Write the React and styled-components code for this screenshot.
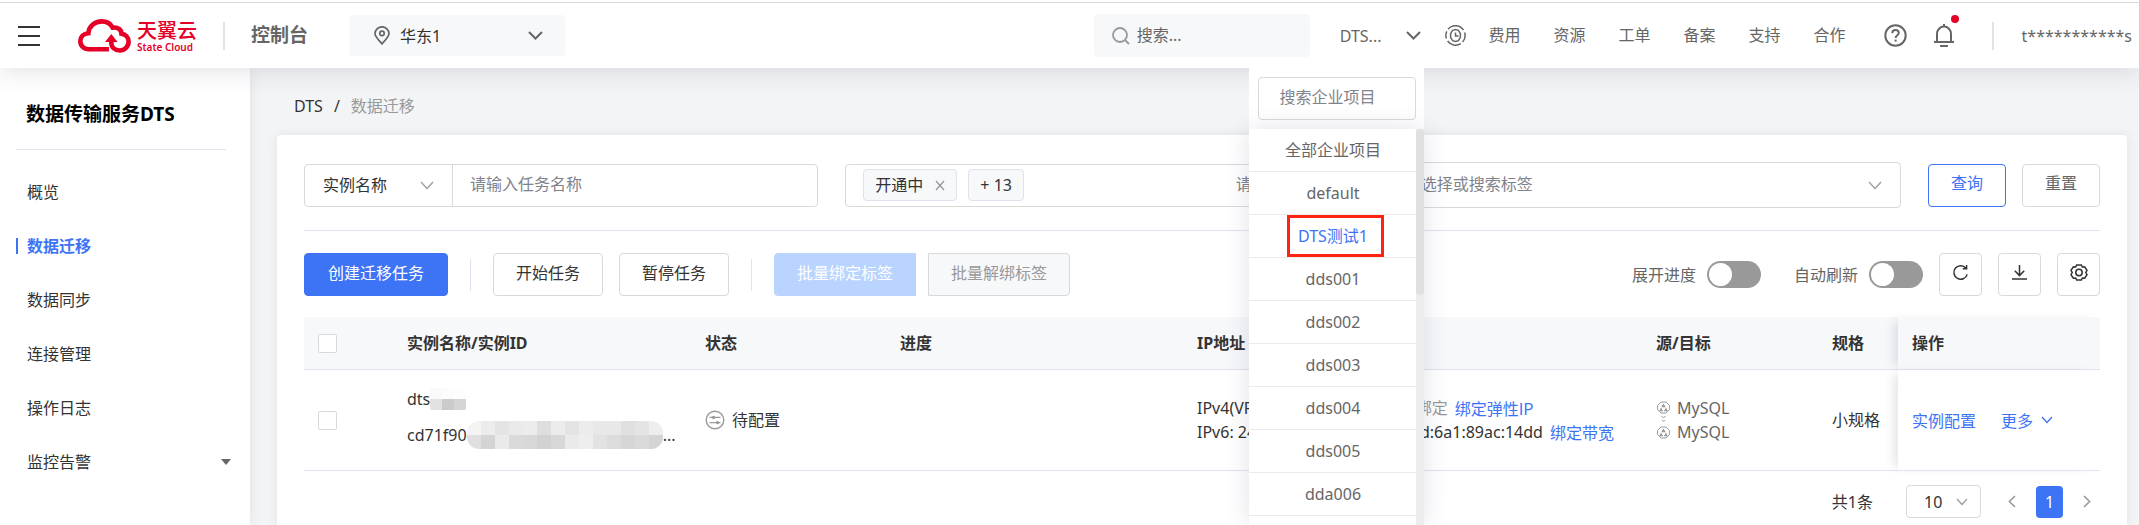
import React, { useState } from 'react';
import styled, { createGlobalStyle, ThemeProvider } from 'styled-components';

const theme = {
    primary: '#3d73f5',
    primary_disabled: '#b8d4ff',
    brand: '#e60027',
    text_primary: '#333333',
    text_secondary: '#666666',
    text_muted: '#999999',
    border: '#d9d9d9',
    divider: '#e1e3ee',
    bgLight: '#f7f8fa',
};

const GlobalStyle = createGlobalStyle`
    * {
        box-sizing: border-box;
    }

    body {
        margin: 0;
        background: #f3f4f6;
        color: #333333;
    }

    body, button, input, select {
        font-family: "Noto Sans", "Noto Sans CJK SC", sans-serif;
        font-size: 16px;
        line-height: 24px;
    }

    button, input, select {
        margin: 0;
        padding: 0;
        border: none;
        background: none;
        color: inherit;
    }

    button {
        cursor: pointer;
    }

    input::placeholder {
        color: #7f838c;
        opacity: 1;
    }

    a {
        color: inherit;
        text-decoration: none;
    }
`;

const Page = styled.div`
    height: 100vh;
    overflow: hidden;
    display: flex;
    flex-direction: column;
`;

/* ---------- header ---------- */

const TopLine = styled.div`
    height: 3px;
    flex: none;
    background: #ffffff;
    border-bottom: 1px solid #d9d9d9;
    position: relative;
    z-index: 11;
`;

const Header = styled.header`
    position: relative;
    z-index: 10;
    flex: none;
    height: 65px;
    padding: 0 7px 0 18px;
    display: flex;
    align-items: center;
    background: #ffffff;
    color: ${({ theme }) => theme.text_secondary};
    box-shadow: 0 4px 24px rgba(30, 35, 70, 0.13);
    white-space: nowrap;
`;

const MenuButton = styled.button`
    width: 22px;
    height: 20px;
    margin-right: 38px;
    display: flex;
    flex-direction: column;
    justify-content: space-between;

    span {
        width: 22px;
        height: 2px;
        background: ${({ theme }) => theme.text_primary};
    }
`;

const Brand = styled.a`
    display: flex;
    align-items: center;
    gap: 6px;
    color: ${({ theme }) => theme.brand};
`;

const BrandText = styled.span`
    display: flex;
    flex-direction: column;
`;

const BrandName = styled.span`
    font-family: "Noto Sans CJK SC", sans-serif;
    font-size: 20px;
    font-weight: 500;
    line-height: 22px;
`;

const BrandSub = styled.span`
    font-size: 10px;
    font-weight: 600;
    line-height: 12px;
`;

const HeaderDivider = styled.span`
    width: 2px;
    height: 28px;
    margin: 0 26px;
    background: #e3e3e3;
`;

const ConsoleTitle = styled.span`
    padding-bottom: 2px;
    font-size: 19px;
    font-weight: 600;
`;

const RegionButton = styled.button`
    width: 216px;
    height: 41px;
    margin-left: 41px;
    padding: 0 22px 0 25px;
    display: flex;
    align-items: center;
    gap: 10px;
    border-radius: 4px;
    background: ${({ theme }) => theme.bgLight};
    color: ${({ theme }) => theme.text_primary};

    svg {
        color: ${({ theme }) => theme.text_secondary};
    }

    svg:last-child {
        margin-left: auto;
    }
`;

const HeaderRight = styled.div`
    height: 100%;
    margin-left: auto;
    display: flex;
    align-items: center;
`;

const SearchBox = styled.label`
    width: 216px;
    height: 43px;
    padding: 0 18px;
    display: flex;
    align-items: center;
    gap: 7px;
    border-radius: 4px;
    background: ${({ theme }) => theme.bgLight};
    color: ${({ theme }) => theme.text_muted};

    input {
        flex: 1;
        min-width: 0;
        padding-bottom: 2px;
    }

    input::placeholder {
        color: ${({ theme }) => theme.text_secondary};
    }
`;

const ProjectPicker = styled.div`
    position: relative;
    height: 100%;
    margin-right: 21px;
    display: flex;
    align-items: center;
`;

const ProjectButton = styled.button`
    height: 100%;
    padding: 0 3px 0 30px;
    display: flex;
    align-items: center;
    gap: 25px;
`;

const HeaderNav = styled.nav`
    margin: 0 38px 0 22px;
    padding-bottom: 2px;
    display: flex;
    gap: 33px;
`;

const IconButton = styled.button`
    position: relative;
    display: flex;
`;

const BellButton = styled(IconButton)`
    margin-left: 27px;
`;

const RedDot = styled.span`
    position: absolute;
    top: -9px;
    right: -5px;
    width: 8px;
    height: 8px;
    border-radius: 50%;
    background: ${({ theme }) => theme.brand};
`;

const UserDivider = styled(HeaderDivider)`
    margin: 0 28px 0 38px;
`;

/* ---------- project dropdown ---------- */

const Dropdown = styled.div`
    position: absolute;
    top: 100%;
    right: 0;
    width: 175px;
    height: calc(100vh - 68px);
    display: flex;
    flex-direction: column;
    background: #ffffff;
`;

const DropdownSearch = styled.div`
    padding: 9px 8px 9px 9px;

    input {
        width: 100%;
        height: 43px;
        padding: 0 20px 3px;
        border: 1px solid ${({ theme }) => theme.border};
        border-radius: 4px;
    }
`;

const DropdownBody = styled.div`
    flex: 1;
    display: flex;
    background: #ffffff;
    box-shadow: 0 0 24px rgba(30, 35, 90, 0.13);
`;

const ProjectList = styled.ul`
    flex: 1;
    margin: 0;
    padding: 0;
    list-style: none;
`;

const ProjectItem = styled.li`
    height: 43px;
    display: flex;
    align-items: center;
    justify-content: center;
    border-bottom: 1px solid #ebebeb;

    button {
        margin-right: ${({ $active }) => ($active ? '-5px' : '0')};
        padding: ${({ $active }) => ($active ? '6px 13px 6px 8px' : '6px 8px')};
        color: ${({ theme, $active }) => ($active ? theme.primary : 'inherit')};
        outline: ${({ $active }) => ($active ? '3px solid #ff2314' : 'none')};
    }
`;

const ScrollTrack = styled.div`
    width: 8px;
    background: #ededed;
`;

const ScrollThumb = styled.div`
    height: 42%;
    border-radius: 4px;
    background: #e0e0e0;
`;

/* ---------- sidebar ---------- */

const Body = styled.div`
    flex: 1;
    min-height: 0;
    display: flex;
`;

const Sidebar = styled.aside`
    flex: none;
    width: 250px;
    padding: 32px 16px 0;
    background: #ffffff;
    box-shadow: 0 0 14px rgba(0, 0, 0, 0.08);
`;

const SidebarTitle = styled.h2`
    margin: 0 0 15px;
    padding: 0 8px 21px 10px;
    border-bottom: 1px solid ${({ theme }) => theme.divider};
    color: #000000;
    font-size: 19px;
    font-weight: 700;
    line-height: 28px;
    width: 210px;
`;

const SideItem = styled.a`
    height: 54px;
    display: flex;
    align-items: center;
    justify-content: space-between;
    padding-right: 3px;
    color: ${({ theme, $active }) => ($active ? theme.primary : theme.text_primary)};
    font-weight: ${({ $active }) => ($active ? 700 : 400)};
`;

const SideLabel = styled.span`
    padding-left: 9px;
    border-left: 2px solid ${({ theme, $active }) => ($active ? theme.primary : 'transparent')};
    line-height: 16px;
`;

const Caret = styled.span`
    border: 5px solid transparent;
    border-top: 6px solid ${({ theme }) => theme.text_secondary};
    border-bottom: none;
`;

/* ---------- content ---------- */

const Main = styled.main`
    flex: 1;
    min-width: 0;
    padding: 26px 12px 0 27px;
    display: flex;
    flex-direction: column;
`;

const Breadcrumb = styled.nav`
    padding: 0 17px 17px;
    display: flex;
    gap: 11px;

    span:last-child {
        color: ${({ theme }) => theme.text_muted};
    }
`;

const Card = styled.section`
    flex: 1;
    padding: 27px 27px 0;
    border-radius: 4px 4px 0 0;
    background: #ffffff;
    box-shadow: 0 0 12px rgba(0, 0, 0, 0.07);
`;

const FilterBar = styled.div`
    display: grid;
    grid-template-columns: repeat(3, minmax(0, 1fr)) auto;
    align-items: center;
    gap: 27px;
    height: 69px;
    padding-bottom: 22px;
    border-bottom: 1px solid ${({ theme }) => theme.divider};
`;

const Field = styled.div`
    height: ${({ $height }) => $height || 43}px;
    display: flex;
    align-items: center;
    gap: 11px;
    padding: 0 18px 0 17px;
    border: 1px solid ${({ theme }) => theme.border};
    border-radius: 4px;
    color: ${({ theme }) => theme.text_muted};

    input {
        flex: 1;
        min-width: 0;
        padding-bottom: 2px;
        color: ${({ theme }) => theme.text_primary};
    }
`;

const NameField = styled(Field)`
    padding: 0;
    gap: 0;

    input {
        height: 100%;
        padding: 0 17px 3px;
        border-left: 1px solid ${({ theme }) => theme.border};
    }
`;

const SelectWrap = styled.div`
    width: ${({ $width }) => $width}px;
    display: flex;
    align-items: center;
    color: ${({ theme }) => theme.text_muted};

    select {
        appearance: none;
        flex: 1;
        min-width: 0;
        height: 30px;
        padding-left: ${({ $indent }) => $indent}px;
        color: ${({ theme }) => theme.text_primary};
        outline: none;
    }

    svg {
        margin-right: ${({ $end }) => $end}px;
    }
`;

const StatusInput = styled.input`
    max-width: 105px;
    margin-left: auto;
`;

const Tag = styled.span`
    height: 32px;
    padding: 0 11px;
    display: flex;
    align-items: center;
    gap: 12px;
    border: 1px solid #dfe2ec;
    border-radius: 4px;
    background: ${({ theme }) => theme.bgLight};
    color: ${({ theme }) => theme.text_primary};
    white-space: nowrap;

    button {
        display: flex;
        color: ${({ theme }) => theme.text_muted};
    }
`;

const ButtonPair = styled.div`
    display: flex;
    gap: 16px;
`;

const Button = styled.button`
    height: 43px;
    padding: 0 22px 4px;
    border: 1px solid ${({ theme }) => theme.border};
    border-radius: 4px;
    background: #ffffff;
    color: ${({ theme }) => theme.text_primary};
    white-space: nowrap;
`;

const PrimaryButton = styled(Button)`
    padding: 0 23px 4px;
    background: ${({ theme }) => theme.primary};
    border-color: ${({ theme }) => theme.primary};
    color: #ffffff;
`;

const OutlineButton = styled(Button)`
    border-color: ${({ theme }) => theme.primary};
    color: ${({ theme }) => theme.primary};
`;

const ResetButton = styled(Button)`
    color: ${({ theme }) => theme.text_secondary};
`;

const BindButton = styled(Button)`
    border-color: ${({ theme }) => theme.primary_disabled};
    border-radius: 4px 0 0 4px;
    background: ${({ theme }) => theme.primary_disabled};
    color: #ffffff;
`;

const UnbindButton = styled(Button)`
    border-radius: 0 4px 4px 0;
    background: ${({ theme }) => theme.bgLight};
    color: ${({ theme }) => theme.text_muted};
`;

const SquareButton = styled(Button)`
    width: 43px;
    padding: 0 0 4px;
    display: flex;
    align-items: center;
    justify-content: center;
`;

const Toolbar = styled.div`
    display: flex;
    align-items: center;
    gap: 16px;
    padding: 22px 0 21px;
`;

const ToolDivider = styled.span`
    width: 1px;
    height: 32px;
    margin: 0 6px;
    background: ${({ theme }) => theme.divider};
`;

const TagButtons = styled.div`
    display: flex;
    gap: 12px;
`;

const ToolbarRight = styled.div`
    margin-left: auto;
    display: flex;
    align-items: center;
    gap: 16px;
`;

const SwitchLabel = styled.label`
    display: flex;
    align-items: center;
    gap: 11px;
    margin-left: 17px;
    color: ${({ theme }) => theme.text_secondary};
    white-space: nowrap;
`;

const Switch = styled.input`
    appearance: none;
    width: 54px;
    height: 27px;
    padding: 2px;
    display: flex;
    border-radius: 14px;
    background: ${({ theme, checked }) => (checked ? theme.primary : theme.text_muted)};
    justify-content: ${({ checked }) => (checked ? 'flex-end' : 'flex-start')};
    cursor: pointer;

    &::before {
        content: '';
        width: 23px;
        height: 23px;
        border-radius: 50%;
        background: #ffffff;
    }
`;

const Checkbox = styled.input`
    appearance: none;
    display: block;
    width: 19px;
    height: 19px;
    border: 1px solid ${({ theme }) => theme.border};
    border-radius: 2px;
    background: #ffffff;
`;

const Table = styled.table`
    width: 100%;
    table-layout: fixed;
    border-collapse: separate;
    border-spacing: 0;
`;

const Th = styled.th`
    height: 53px;
    padding: 0 0 0 14px;
    border-bottom: 1px solid ${({ theme }) => theme.divider};
    background: ${({ theme }) => theme.bgLight};
    font-weight: 700;
    text-align: left;
    white-space: nowrap;
    box-shadow: ${({ $fixed }) => ($fixed ? '-8px 0 10px -4px rgba(30, 35, 90, 0.12)' : 'none')};
`;

const Td = styled.td`
    height: 101px;
    padding: 0 0 0 14px;
    border-bottom: 1px solid ${({ theme }) => theme.divider};
    background: #ffffff;
    white-space: nowrap;
    box-shadow: ${({ $fixed }) => ($fixed ? '-8px 0 10px -4px rgba(30, 35, 90, 0.12)' : 'none')};
`;

const NameCell = styled.div`
    padding-bottom: 6px;
`;

const NameLine = styled.div`
    height: 36px;
    display: flex;
    align-items: center;
`;

const Status = styled.div`
    display: flex;
    align-items: center;
    gap: 7px;

    svg {
        color: ${({ theme }) => theme.text_muted};
    }
`;

const AddressLine = styled.div`
    display: flex;
    gap: 7px;
`;

const Muted = styled.span`
    color: ${({ theme }) => theme.text_muted};
`;

const Link = styled.a`
    display: inline-flex;
    align-items: center;
    gap: 8px;
    margin-right: ${({ $gap }) => $gap || 0}px;
    color: ${({ theme }) => theme.primary};
    font-family: "Noto Sans CJK SC", sans-serif;
`;

const Endpoints = styled.div`
    display: flex;
    align-items: center;
    gap: 7px;
    padding-left: 1px;
    color: ${({ theme }) => theme.text_secondary};

    svg {
        color: ${({ theme }) => theme.text_muted};
    }
`;

const Pagination = styled.div`
    display: flex;
    align-items: center;
    justify-content: flex-end;
    padding: 14px 9px 14px 0;

    button {
        display: flex;
        color: ${({ theme }) => theme.text_muted};
    }
`;

const PageSize = styled(SelectWrap)`
    height: 33px;
    margin: 0 27px 0 33px;
    border: 1px solid ${({ theme }) => theme.border};
    border-radius: 4px;
`;

const PageNumber = styled.a`
    width: 27px;
    height: 32px;
    margin: 0 20px;
    border-radius: 4px;
    background: ${({ theme }) => theme.primary};
    color: #ffffff;
    line-height: 32px;
    text-align: center;
`;

/* ---------- icons ---------- */

const Svg = ({ w, h, stroke = 2, children }) => (
    <svg
        width={w}
        height={h}
        viewBox={`0 0 ${w} ${h}`}
        fill="none"
        stroke="currentColor"
        strokeWidth={stroke}
        aria-hidden="true"
    >
        {children}
    </svg>
);

const Chevron = ({ w = 15, h = 9, stroke = 2 }) => (
    <Svg w={w} h={h} stroke={stroke}>
        <path d={`M1 1L${w / 2} ${h - 1.5}L${w - 1} 1`} />
    </Svg>
);

const CloudLogo = () => (
    <Svg w={53} h={34} stroke={4.6}>
        <path d="M31 30.2H10.8C5.8 30.2 2.3 26.6 2.3 22.2C2.3 17.8 5.6 14.6 10.4 14.2C10.8 7.4 16.6 2.4 23.8 2.4C29 2.4 32.6 4.8 34.6 8.6C40 7.8 43.4 10.8 43.4 14.6C47.6 15.2 50.6 18.6 50.6 22.6C50.6 27.6 46.6 31.5 41.8 31.5C37 31.5 33.3 28.4 33.3 23.6V21" />
        <path d="M33.3 15L39.6 23H27Z" fill="currentColor" stroke="none" />
    </Svg>
);

const PinIcon = () => (
    <Svg w={16} h={19} stroke={1.7}>
        <path d="M8 17.8C5 14.6 1 11 1 7.6a7 6.8 0 0 1 14 0C15 11 11 14.6 8 17.8Z" />
        <circle cx="8" cy="7.4" r="2.2" />
    </Svg>
);

const SearchIcon = () => (
    <Svg w={18} h={18} stroke={1.8}>
        <circle cx="8" cy="8" r="7" />
        <path d="M13 13L17 17" />
    </Svg>
);

const ClockIcon = () => (
    <Svg w={21} h={21} stroke={1.5}>
        <path d="M3 4.2A9.6 9.6 0 0 1 18.6 5.2M19.6 7.6A9.6 9.6 0 0 1 17.6 17M15.8 18.6A9.6 9.6 0 0 1 2.6 16M1.4 13.6A9.6 9.6 0 0 1 1.8 6.4" />
        <path d="M7.6 5.4L10.5 4.6L13.4 5.4L15.4 8.6V12.4L13.4 15.6L10.5 16.4L7.6 15.6L5.6 12.4V8.6Z" />
        <path d="M10.5 7.4V11H13.6" />
    </Svg>
);

const HelpIcon = () => (
    <Svg w={23} h={23}>
        <circle cx="11.5" cy="11.5" r="10.2" />
        <path d="M8.3 9.2C8.3 7.2 9.7 6 11.5 6S14.8 7.2 14.8 9C14.8 11.3 11.6 11.4 11.6 14" />
        <path d="M11.6 15.6V17.6" />
    </Svg>
);

const BellIcon = () => (
    <Svg w={20} h={23}>
        <path d="M0 18H20M3 18V10A7 7.4 0 0 1 17 10V18M10 0V3M6 22H14" />
    </Svg>
);

const CloseIcon = () => (
    <Svg w={10} h={11} stroke={1.3}>
        <path d="M1 1L9 10M9 1L1 10" />
    </Svg>
);

const RefreshIcon = () => (
    <Svg w={17} h={17} stroke={1.5}>
        <path d="M14 4.2A6.8 6.8 0 1 0 15.2 10.4M14.6 1V4.8H10.8" />
    </Svg>
);

const DownloadIcon = () => (
    <Svg w={15} h={15} stroke={1.5}>
        <path d="M7.5 0V10.4M2.8 5.8L7.5 10.6L12.2 5.8M0 14H15" />
    </Svg>
);

const SettingIcon = () => (
    <Svg w={18} h={17} stroke={1.5}>
        <path d="M6.6 1H11.4L12.3 3L14.6 2.8L17 6.4L15.8 8.5L17 10.6L14.6 14.2L12.3 14L11.4 16H6.6L5.7 14L3.4 14.2L1 10.6L2.2 8.5L1 6.4L3.4 2.8L5.7 3Z" />
        <circle cx="9" cy="8.5" r="3.2" />
    </Svg>
);

const PendingIcon = () => (
    <Svg w={20} h={20} stroke={1.4}>
        <circle cx="10" cy="10" r="8.8" />
        <path d="M4.5 7.4H15.5M4.5 12.6H15.5" />
        <circle cx="8.6" cy="7.4" r="1.6" fill="currentColor" stroke="none" />
        <circle cx="12.6" cy="12.6" r="1.6" fill="currentColor" stroke="none" />
    </Svg>
);

const SourceTargetIcon = () => (
    <Svg w={13} h={38} stroke={1}>
        {[0, 25].map((y) => (
            <g key={y} transform={`translate(0 ${y})`}>
                <path d="M4 1H9L12.4 4.4V8.6L9 12H4L0.6 8.6V4.4Z" />
                <path d="M6.5 2.6L8.8 6.2H4.2ZM4 6.6L6.2 10.2H2.2ZM9 6.6L10.8 10.2H6.8Z" fill="currentColor" stroke="none" />
            </g>
        ))}
        <path d="M4.6 15L6.5 17L8.4 15M5.2 19L6.5 20.4L7.8 19" />
    </Svg>
);

const ArrowIcon = ({ d }) => (
    <Svg w={8} h={13} stroke={1.6}>
        <path d={d} />
    </Svg>
);

/* pixelated cover over the private part of a value */
const Mosaic = ({ rows, cell, height, radius, label }) => (
    <svg width={rows[0].length * cell} height={height} role="img" aria-label={label}>
        <clipPath id={label}>
            <rect width={rows[0].length * cell} height={height} rx={radius} />
        </clipPath>
        <g clipPath={`url(#${label})`}>
            {rows.map((row, y) =>
                row.map((shade, x) => (
                    <rect
                        key={`${x}-${y}`}
                        x={x * cell}
                        y={(y * height) / rows.length}
                        width={cell}
                        height={height / rows.length}
                        fill={`rgb(${shade}, ${shade}, ${shade})`}
                    />
                ))
            )}
        </g>
    </svg>
);

/* ---------- data ---------- */

const navItems = ['费用', '资源', '工单', '备案', '支持', '合作'];
const sideItems = ['概览', '数据迁移', '数据同步', '连接管理', '操作日志', '监控告警'];
const projects = ['全部企业项目', 'default', 'DTS测试1', 'dds001', 'dds002', 'dds003', 'dds004', 'dds005', 'dda006'];

const columns = [
    { title: '实例名称/实例ID', width: 298 },
    { title: '状态', width: 195 },
    { title: '进度', width: 297 },
    { title: 'IP地址', width: 459 },
    { title: '源/目标', width: 176 },
    { title: '规格', width: 80 },
];

const nameShades = [[250, 252, 253], [226, 203, 213]];
const idShades = [
    [244, 236, 228, 234, 236, 222, 236, 228, 236, 232, 232, 224, 228, 238],
    [224, 212, 234, 218, 216, 210, 216, 234, 238, 226, 220, 214, 218, 212],
];

const ProjectDropdown = ({ project, onSelect }) => (
    <Dropdown>
        <DropdownSearch>
            <input type="text" placeholder="搜索企业项目" aria-label="搜索企业项目" />
        </DropdownSearch>
        <DropdownBody>
            <ProjectList>
                {projects.map((name) => (
                    <ProjectItem key={name} $active={name === project}>
                        <button type="button" onClick={() => onSelect(name)}>{name}</button>
                    </ProjectItem>
                ))}
            </ProjectList>
            <ScrollTrack>
                <ScrollThumb />
            </ScrollTrack>
        </DropdownBody>
    </Dropdown>
);

const TaskTable = () => (
    <Table>
        <colgroup>
            <col style={{ width: 89 }} />
            {columns.map((col) => (
                <col key={col.title} style={{ width: col.width }} />
            ))}
            <col />
        </colgroup>
        <thead>
            <tr>
                <Th><Checkbox type="checkbox" aria-label="全选" /></Th>
                {columns.map((col) => (
                    <Th key={col.title}>{col.title}</Th>
                ))}
                <Th $fixed>操作</Th>
            </tr>
        </thead>
        <tbody>
            <tr>
                <Td><Checkbox type="checkbox" aria-label="选择任务" /></Td>
                <Td>
                    <NameCell>
                        <NameLine>
                            dts
                            <Mosaic rows={nameShades} cell={12} height={22} radius={2} label="name" />
                        </NameLine>
                        <NameLine>
                            cd71f90
                            <Mosaic rows={idShades} cell={14} height={28} radius={12} label="id" />
                            ...
                        </NameLine>
                    </NameCell>
                </Td>
                <Td>
                    <Status><PendingIcon />待配置</Status>
                </Td>
                <Td />
                <Td>
                    <AddressLine>
                        <span>IPv4(VPC) : 192.168.0.114 <Muted>/ 未绑定</Muted></span>
                        <Link href="#">绑定弹性IP</Link>
                    </AddressLine>
                    <AddressLine>
                        <span>IPv6: 240e:982:d801:43e2:a00d:6a1:89ac:14dd</span>
                        <Link href="#">绑定带宽</Link>
                    </AddressLine>
                </Td>
                <Td>
                    <Endpoints>
                        <SourceTargetIcon />
                        <div>
                            <div>MySQL</div>
                            <div>MySQL</div>
                        </div>
                    </Endpoints>
                </Td>
                <Td>小规格</Td>
                <Td $fixed>
                    <Link href="#" $gap={25}>实例配置</Link>
                    <Link href="#">更多 <Chevron w={12} h={8} stroke={1.3} /></Link>
                </Td>
            </tr>
        </tbody>
    </Table>
);

const App = () => {
    const [project, setProject] = useState('DTS测试1');
    const [open, setOpen] = useState(true);
    const [expand, setExpand] = useState(false);
    const [autoRefresh, setAutoRefresh] = useState(false);

    return (
        <ThemeProvider theme={theme}>
            <GlobalStyle />
            <Page>
                <TopLine />
                <Header>
                    <MenuButton type="button" aria-label="菜单">
                        <span />
                        <span />
                        <span />
                    </MenuButton>
                    <Brand href="#">
                        <CloudLogo />
                        <BrandText>
                            <BrandName>天翼云</BrandName>
                            <BrandSub>State Cloud</BrandSub>
                        </BrandText>
                    </Brand>
                    <HeaderDivider />
                    <ConsoleTitle>控制台</ConsoleTitle>
                    <RegionButton type="button">
                        <PinIcon />
                        华东1
                        <Chevron />
                    </RegionButton>

                    <HeaderRight>
                        <SearchBox>
                            <SearchIcon />
                            <input type="text" placeholder="搜索..." aria-label="搜索" />
                        </SearchBox>
                        <ProjectPicker>
                            <ProjectButton type="button" onClick={() => setOpen(!open)}>
                                DTS...
                                <Chevron />
                            </ProjectButton>
                            {open && <ProjectDropdown project={project} onSelect={setProject} />}
                        </ProjectPicker>
                        <IconButton type="button" aria-label="历史">
                            <ClockIcon />
                        </IconButton>
                        <HeaderNav>
                            {navItems.map((item) => (
                                <a key={item} href="#">{item}</a>
                            ))}
                        </HeaderNav>
                        <IconButton type="button" aria-label="帮助">
                            <HelpIcon />
                        </IconButton>
                        <BellButton type="button" aria-label="消息">
                            <BellIcon />
                            <RedDot />
                        </BellButton>
                        <UserDivider />
                        <a href="#">t***********s</a>
                    </HeaderRight>
                </Header>

                <Body>
                    <Sidebar>
                        <SidebarTitle>数据传输服务DTS</SidebarTitle>
                        {sideItems.map((item) => (
                            <SideItem key={item} href="#" $active={item === '数据迁移'}>
                                <SideLabel $active={item === '数据迁移'}>{item}</SideLabel>
                                {item === '监控告警' && <Caret />}
                            </SideItem>
                        ))}
                    </Sidebar>

                    <Main>
                        <Breadcrumb>
                            <a href="#">DTS</a>
                            <span>/</span>
                            <span>数据迁移</span>
                        </Breadcrumb>
                        <Card>
                            <FilterBar>
                                <NameField>
                                    <SelectWrap $width={147} $indent={18} $end={18}>
                                        <select aria-label="筛选字段">
                                            <option>实例名称</option>
                                        </select>
                                        <Chevron w={14} h={9} stroke={1.2} />
                                    </SelectWrap>
                                    <input type="text" placeholder="请输入任务名称" aria-label="任务名称" />
                                </NameField>
                                <Field>
                                    <Tag>
                                        开通中
                                        <button type="button" aria-label="移除"><CloseIcon /></button>
                                    </Tag>
                                    <Tag>+ 13</Tag>
                                    <StatusInput type="text" placeholder="请选择" aria-label="状态" />
                                </Field>
                                <Field $height={46}>
                                    <input type="text" placeholder="请选择或搜索标签" aria-label="标签" />
                                    <Chevron w={14} h={9} stroke={1.2} />
                                </Field>
                                <ButtonPair>
                                    <OutlineButton type="button">查询</OutlineButton>
                                    <ResetButton type="button">重置</ResetButton>
                                </ButtonPair>
                            </FilterBar>

                            <Toolbar>
                                <PrimaryButton type="button">创建迁移任务</PrimaryButton>
                                <ToolDivider />
                                <Button type="button">开始任务</Button>
                                <Button type="button">暂停任务</Button>
                                <ToolDivider />
                                <TagButtons>
                                    <BindButton type="button" disabled>批量绑定标签</BindButton>
                                    <UnbindButton type="button" disabled>批量解绑标签</UnbindButton>
                                </TagButtons>
                                <ToolbarRight>
                                    <SwitchLabel>
                                        展开进度
                                        <Switch
                                            type="checkbox"
                                            role="switch"
                                            checked={expand}
                                            onChange={(e) => setExpand(e.target.checked)}
                                        />
                                    </SwitchLabel>
                                    <SwitchLabel>
                                        自动刷新
                                        <Switch
                                            type="checkbox"
                                            role="switch"
                                            checked={autoRefresh}
                                            onChange={(e) => setAutoRefresh(e.target.checked)}
                                        />
                                    </SwitchLabel>
                                    <SquareButton type="button" aria-label="刷新"><RefreshIcon /></SquareButton>
                                    <SquareButton type="button" aria-label="下载"><DownloadIcon /></SquareButton>
                                    <SquareButton type="button" aria-label="设置"><SettingIcon /></SquareButton>
                                </ToolbarRight>
                            </Toolbar>

                            <TaskTable />

                            <Pagination>
                                <span>共1条</span>
                                <PageSize $width={75} $indent={17} $end={12}>
                                    <select aria-label="每页条数">
                                        <option>10</option>
                                    </select>
                                    <Chevron w={12} h={8} stroke={1.2} />
                                </PageSize>
                                <button type="button" aria-label="上一页"><ArrowIcon d="M7 1L1.4 6.5L7 12" /></button>
                                <PageNumber href="#">1</PageNumber>
                                <button type="button" aria-label="下一页"><ArrowIcon d="M1 1L6.6 6.5L1 12" /></button>
                            </Pagination>
                        </Card>
                    </Main>
                </Body>
            </Page>
        </ThemeProvider>
    );
};

export default App;
